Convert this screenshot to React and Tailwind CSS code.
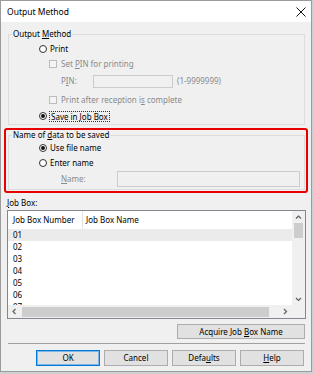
import React from 'react';

const Radio = ({ checked }) => (
  <span className="w-[8px] h-[8px] rounded-full border border-[#333333] bg-white flex items-center justify-center shrink-0">
    {checked && <span className="w-[4px] h-[4px] rounded-full bg-[#111111]" />}
  </span>
);

const Check = () => (
  <span className="w-[8px] h-[8px] border border-[#bcbcbc] bg-[#f4f4f4] shrink-0" />
);

const Chevron = ({ dir }) => {
  const pts = {
    up: '1,4.5 3.5,2 6,4.5',
    down: '1,2 3.5,4.5 6,2',
    left: '4.5,1 2,3.5 4.5,6',
    right: '2,1 4.5,3.5 2,6',
  }[dir];
  return (
    <svg width="7" height="7" viewBox="0 0 7 7">
      <polyline points={pts} fill="none" stroke="#606060" strokeWidth="1.2" />
    </svg>
  );
};

const Btn = ({ children, def }) => (
  <div
    className={
      'w-[64px] h-[16px] flex items-center justify-center bg-[#e1e1e1] border ' +
      (def ? 'border-[#0078d7] shadow-[inset_0_0_0_1px_#7fb6e6]' : 'border-[#adadad]')
    }
  >
    {children}
  </div>
);

const rows = ['01', '02', '03', '04', '05', '06', '07'];

export default function App() {
  return (
    <div className="w-[314px] h-[374px] bg-[#cdd1d4]">
      <div
        className="w-[312px] h-[372px] border border-[#9b9b9b] bg-[#f0f0f0] flex flex-col text-[8px] leading-[10px] text-black"
        style={{ fontFamily: '"Noto Sans", "Open Sans", sans-serif' }}
      >
        {/* title bar */}
        <div className="h-[21px] bg-white flex items-center justify-between pl-[6px] pr-[5px] shrink-0">
          <span className="text-[8.5px]">Output Method</span>
          <svg width="10" height="10" viewBox="0 0 10 10">
            <path d="M0.5 0.5 L9.5 9.5 M9.5 0.5 L0.5 9.5" stroke="#111" strokeWidth="1" />
          </svg>
        </div>

        <div className="flex flex-col pl-[3px]">
          {/* Output Method group */}
          <fieldset className="mt-[7px] ml-[4px] w-[297px] border border-[#dcdcdc] pb-[1px]">
            <legend className="ml-[3px] px-[1px] leading-[10px]">
              Output <u>M</u>ethod
            </legend>
            <div className="mt-[2px] h-[16px] flex items-center pl-[30px] gap-[3px]">
              <Radio />
              <span>Print</span>
            </div>
            <div className="h-[14px] flex items-center pl-[40px] gap-[4px] text-[#8a8a8a]">
              <Check />
              <span>
                Set <u>P</u>IN for printing
              </span>
            </div>
            <div className="h-[20px] flex items-center pl-[52px] text-[#8a8a8a]">
              <span className="w-[32px]">
                P<u>I</u>N:
              </span>
              <span className="w-[80px] h-[13px] border border-[#cccccc] bg-[#f0f0f0]" />
              <span className="ml-[4px]">(1-9999999)</span>
            </div>
            <div className="h-[18px] flex items-center pl-[40px] gap-[4px] text-[#8a8a8a]">
              <Check />
              <span>
                Print after reception i<u>s</u> complete
              </span>
            </div>
            <div className="h-[14px] flex items-center pl-[30px] gap-[2px]">
              <Radio checked />
              <span className="border border-dotted border-[#333] px-[1px] leading-[9px]">Save in Job Box</span>
            </div>
          </fieldset>

          {/* highlighted group */}
          <div className="mt-[3px] w-[304px] border-2 border-[#e60000] rounded-[3px] pl-[2px] pb-[1px]">
            <fieldset className="w-[297px] border border-[#dcdcdc] pb-[2px]">
              <legend className="ml-[3px] px-[1px] leading-[10px]">
                Name of <u>d</u>ata to be saved
              </legend>
              <div className="mt-[1px] h-[14px] flex items-center pl-[30px] gap-[3px]">
                <Radio checked />
                <span>Use file name</span>
              </div>
              <div className="h-[16px] flex items-center pl-[30px] gap-[3px]">
                <Radio />
                <span>Enter name</span>
              </div>
              <div className="h-[16px] flex items-center pl-[52px] text-[#8a8a8a]">
                <span className="w-[56px]">
                  <u>N</u>ame:
                </span>
                <span className="w-[183px] h-[16px] border border-[#cccccc] bg-[#f0f0f0]" />
              </div>
            </fieldset>
          </div>

          {/* Job Box list */}
          <div className="mt-[4px] ml-[3px] h-[12px] flex items-center">
            <span>
              <u>J</u>ob Box:
            </span>
          </div>
          <div className="mt-[1px] ml-[3px] w-[299px] h-[109px] border border-[#828790] bg-white grid grid-cols-[1fr_13px] grid-rows-[1fr_13px]">
            <div className="overflow-hidden flex flex-col">
              <div className="h-[18px] flex items-center shrink-0">
                <span className="w-[75px] h-full flex items-center pl-[5px] border-r border-[#e5e5e5]">Job Box Number</span>
                <span className="pl-[3px]">Job Box Name</span>
              </div>
              {rows.map((r, i) => (
                <div
                  key={r}
                  className={'h-[12px] shrink-0 flex items-center pl-[5px] ' + (i === 0 ? 'bg-[#ebebeb]' : '')}
                >
                  {r}
                </div>
              ))}
            </div>
            <div className="bg-[#f0f0f0] flex flex-col items-center">
              <div className="h-[12px] flex items-center justify-center">
                <Chevron dir="up" />
              </div>
              <div className="w-[9px] h-[15px] bg-[#cdcdcd]" />
              <div className="flex-1" />
              <div className="h-[12px] flex items-center justify-center">
                <Chevron dir="down" />
              </div>
            </div>
            <div className="bg-[#f0f0f0] flex items-center">
              <div className="w-[13px] flex justify-center">
                <Chevron dir="left" />
              </div>
              <div className="ml-[1px] w-[247px] h-[10px] bg-[#cdcdcd]" />
              <div className="flex-1" />
              <div className="w-[13px] flex justify-center">
                <Chevron dir="right" />
              </div>
            </div>
            <div className="bg-[#f0f0f0]" />
          </div>

          {/* acquire button */}
          <div className="mt-[5px] ml-[173px] w-[128px] h-[15px] flex items-center justify-center bg-[#e1e1e1] border border-[#adadad] whitespace-pre">
            {'Acquire Job '}<u>B</u>{'ox Name'}
          </div>

          {/* separator */}
          <div className="mt-[4px] ml-[4px] w-[297px] h-[1px] bg-[#a0a0a0]" />

          {/* bottom buttons */}
          <div className="mt-[6px] ml-[32px] flex gap-[4px]">
            <Btn def>OK</Btn>
            <Btn>Cancel</Btn>
            <Btn>
              Defa<u>u</u>lts
            </Btn>
            <Btn>
              <u>H</u>elp
            </Btn>
          </div>
        </div>
      </div>
    </div>
  );
}
